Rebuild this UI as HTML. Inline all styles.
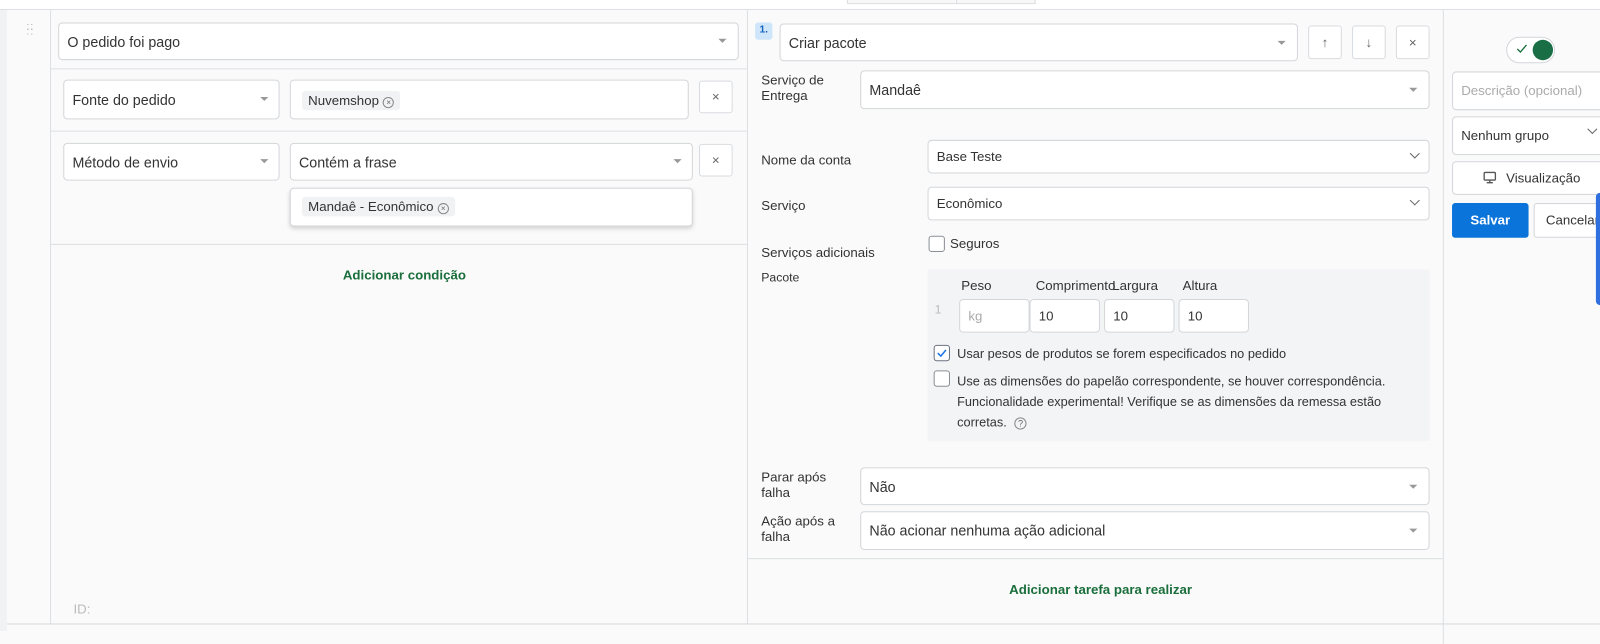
<!DOCTYPE html>
<html><head><meta charset="utf-8"><style>
*{box-sizing:border-box;margin:0;padding:0}
body{width:1600px;height:631px;overflow:hidden;background:#fafafa;font-family:"Liberation Sans",sans-serif;color:#333;font-size:14px;position:relative}
#w{position:absolute;left:0;top:0;width:1568px;height:619px;transform:scale(1.0204);transform-origin:0 0}
.a{position:absolute}
.box{position:absolute;background:#fff;border:1px solid #d3d6da;border-radius:4px}
.t{position:absolute;white-space:nowrap}
.car{position:absolute;width:0;height:0;border-left:4px solid transparent;border-right:4px solid transparent;border-top:4px solid #999}
.chev{position:absolute;width:7px;height:7px;border-right:1.5px solid #666;border-bottom:1.5px solid #666;transform:rotate(45deg)}
.xb{position:absolute;background:#fff;border:1px solid #d8dbdf;border-radius:3px;color:#666;text-align:center;font-size:13px}
.tag{position:absolute;background:#f0f2f4;border-radius:3px;font-size:13px;padding:2px 6px;color:#333}
.ci{display:inline-block;width:11px;height:11px;border:1px solid #888;border-radius:50%;font-size:8px;line-height:9px;text-align:center;color:#666;vertical-align:0;margin-left:4px}
.lbl{position:absolute;font-size:13px;color:#333;line-height:15px}
.cb{position:absolute;width:16px;height:16px;border:1px solid #8a8f95;border-radius:3px;background:#fff}
</style></head><body>
<div class="a" style="left:0;top:0;width:1600px;height:10px;background:#fff;border-bottom:1px solid #dcdfe3"></div>
<div class="a" style="left:0;top:10px;width:7px;height:621px;background:#f1f2f4"></div>
<div id="w">
<div class="a" style="left:830px;top:0;width:185px;height:4px;border:1px solid #dcdfe3;border-top:none;background:#f7f7f7"></div>
<div class="a" style="left:937px;top:0;width:1px;height:4px;background:#dcdfe3"></div>
<div class="a" style="left:49px;top:10px;width:1px;height:601px;background:#dcdfe3"></div>
<div class="a" style="left:732px;top:10px;width:1px;height:601px;background:#dcdfe3"></div>
<div class="a" style="left:1414px;top:10px;width:1px;height:621px;background:#dcdfe3"></div>
<div class="a" style="left:7px;top:611px;width:1593px;height:1px;background:#d6d9dd"></div>
<div class="t" style="left:26px;top:24px;color:#aaa;font-size:10px;line-height:5px;letter-spacing:1px">::<br>::</div>

<div class="box" style="left:57px;top:22px;width:667px;height:37px"></div>
<div class="t" style="left:66px;top:33px">O pedido foi pago</div>
<div class="car" style="left:704px;top:38px"></div>
<div class="a" style="left:50px;top:67px;width:682px;height:1px;background:#dcdfe3"></div>
<div class="box" style="left:62px;top:78px;width:212px;height:39px"></div>
<div class="t" style="left:71px;top:90px">Fonte do pedido</div>
<div class="car" style="left:255px;top:95px"></div>
<div class="box" style="left:284px;top:78px;width:391px;height:39px"></div>
<div class="tag" style="left:296px;top:89px">Nuvemshop<span class="ci">×</span></div>
<div class="xb" style="left:685px;top:79px;width:33px;height:32px;line-height:30px">×</div>
<div class="a" style="left:50px;top:128px;width:682px;height:1px;background:#dcdfe3"></div>
<div class="box" style="left:62px;top:140px;width:212px;height:37px"></div>
<div class="t" style="left:71px;top:151px">Método de envio</div>
<div class="car" style="left:255px;top:156px"></div>
<div class="box" style="left:284px;top:140px;width:395px;height:37px"></div>
<div class="t" style="left:293px;top:151px">Contém a frase</div>
<div class="car" style="left:660px;top:156px"></div>
<div class="xb" style="left:685px;top:141px;width:33px;height:32px;line-height:30px">×</div>
<div class="box" style="left:284px;top:184px;width:395px;height:38px;box-shadow:0 2px 4px rgba(0,0,0,.15)"></div>
<div class="tag" style="left:296px;top:193px">Mandaê - Econômico<span class="ci">×</span></div>
<div class="a" style="left:50px;top:239px;width:682px;height:1px;background:#dcdfe3"></div>
<div class="t" style="left:336px;top:262px;color:#1a6e3c;font-size:13px;font-weight:bold">Adicionar condição</div>
<div class="t" style="left:72px;top:589px;color:#bbb;font-size:13px">ID:</div>

<div class="a" style="left:740px;top:22px;width:17px;height:17px;background:#cfe5fa;border-radius:3px;color:#1565c0;font-size:10px;font-weight:bold;text-align:center;line-height:16px">1.</div>
<div class="box" style="left:764px;top:23px;width:508px;height:37px"></div>
<div class="t" style="left:773px;top:34px">Criar pacote</div>
<div class="car" style="left:1252px;top:40px"></div>
<div class="xb" style="left:1282px;top:25px;width:33px;height:33px;line-height:31px">↑</div>
<div class="xb" style="left:1325px;top:25px;width:33px;height:33px;line-height:31px">↓</div>
<div class="xb" style="left:1368px;top:25px;width:33px;height:33px;line-height:31px">×</div>
<div class="lbl" style="left:746px;top:71px">Serviço de<br>Entrega</div>
<div class="box" style="left:843px;top:69px;width:558px;height:38px"></div>
<div class="t" style="left:852px;top:80px">Mandaê</div>
<div class="car" style="left:1381px;top:86px"></div>
<div class="lbl" style="left:746px;top:149px">Nome da conta</div>
<div class="box" style="left:909px;top:137px;width:492px;height:33px"></div>
<div class="t" style="left:918px;top:146px;font-size:13px">Base Teste</div>
<div class="chev" style="left:1383px;top:147px"></div>
<div class="lbl" style="left:746px;top:194px">Serviço</div>
<div class="box" style="left:909px;top:183px;width:492px;height:33px"></div>
<div class="t" style="left:918px;top:192px;font-size:13px">Econômico</div>
<div class="chev" style="left:1383px;top:193px"></div>
<div class="lbl" style="left:746px;top:240px">Serviços adicionais</div>
<div class="cb" style="left:910px;top:231px"></div>
<div class="t" style="left:931px;top:231px;font-size:13px">Seguros</div>
<div class="lbl" style="left:746px;top:265px;font-size:12px">Pacote</div>
<div class="a" style="left:909px;top:264px;width:492px;height:168px;background:#f3f4f6"></div>
<div class="t" style="left:942px;top:272px;font-size:13px">Peso</div>
<div class="t" style="left:1015px;top:272px;font-size:13px">Comprimento</div>
<div class="t" style="left:1090px;top:272px;font-size:13px">Largura</div>
<div class="t" style="left:1159px;top:272px;font-size:13px">Altura</div>
<div class="t" style="left:916px;top:296px;font-size:12px;color:#bbb">1</div>
<div class="box" style="left:940px;top:293px;width:69px;height:33px"></div>
<div class="t" style="left:949px;top:302px;font-size:13px;color:#aaa">kg</div>
<div class="box" style="left:1009px;top:293px;width:69px;height:33px"></div>
<div class="t" style="left:1018px;top:302px;font-size:13px">10</div>
<div class="box" style="left:1082px;top:293px;width:69px;height:33px"></div>
<div class="t" style="left:1091px;top:302px;font-size:13px">10</div>
<div class="box" style="left:1155px;top:293px;width:69px;height:33px"></div>
<div class="t" style="left:1164px;top:302px;font-size:13px">10</div>
<div class="cb" style="left:915px;top:338px;border-color:#6b7280"><svg width="14" height="14" style="position:absolute;left:0;top:0"><path d="M3 7l3 3 5-6" stroke="#1a73e8" stroke-width="1.5" fill="none"/></svg></div>
<div class="t" style="left:938px;top:340px;font-size:12.5px">Usar pesos de produtos se forem especificados no pedido</div>
<div class="cb" style="left:915px;top:363px"></div>
<div class="t" style="left:938px;top:364px;font-size:12.5px;line-height:20px;white-space:normal;width:440px">Use as dimensões do papelão correspondente, se houver correspondência. Funcionalidade experimental! Verifique se as dimensões da remessa estão corretas. <span class="ci" style="width:12px;height:12px;font-size:9px;line-height:10px">?</span></div>
<div class="lbl" style="left:746px;top:460px">Parar após<br>falha</div>
<div class="box" style="left:843px;top:458px;width:558px;height:37px"></div>
<div class="t" style="left:852px;top:469px">Não</div>
<div class="car" style="left:1381px;top:475px"></div>
<div class="lbl" style="left:746px;top:503px">Ação após a<br>falha</div>
<div class="box" style="left:843px;top:501px;width:558px;height:38px"></div>
<div class="t" style="left:852px;top:512px">Não acionar nenhuma ação adicional</div>
<div class="car" style="left:1381px;top:518px"></div>
<div class="a" style="left:733px;top:547px;width:681px;height:1px;background:#dcdfe3"></div>
<div class="t" style="left:989px;top:570px;color:#1a6e3c;font-size:13px;font-weight:bold">Adicionar tarefa para realizar</div>

<div class="a" style="left:1476px;top:36px;width:48px;height:26px;border:1px solid #d3d6da;border-radius:13px;background:#fff"></div>
<svg class="a" style="left:1486px;top:43px" width="12" height="10"><path d="M1 5l3 3 6-7" stroke="#1a6e3c" stroke-width="1.3" fill="none"/></svg>
<div class="a" style="left:1502px;top:39px;width:20px;height:20px;border-radius:50%;background:#1a6e45"></div>
<div class="box" style="left:1423px;top:70px;width:190px;height:38px"></div>
<div class="t" style="left:1432px;top:81px;color:#aaa;font-size:13px">Descrição (opcional)</div>
<div class="box" style="left:1423px;top:114px;width:190px;height:38px"></div>
<div class="t" style="left:1432px;top:125px;font-size:13px">Nenhum grupo</div>
<div class="chev" style="left:1557px;top:123px"></div>
<div class="box" style="left:1423px;top:158px;width:190px;height:33px"></div>
<svg class="a" style="left:1453px;top:167px" width="14" height="14"><rect x="1.5" y="2" width="11" height="7.5" rx="1" stroke="#555" stroke-width="1.3" fill="none"/><path d="M4 12h6M7 9.5v2.5" stroke="#555" stroke-width="1.3"/></svg>
<div class="t" style="left:1476px;top:167px;font-size:13px">Visualização</div>
<div class="a" style="left:1423px;top:199px;width:75px;height:34px;background:#0b74da;border-radius:3px;color:#fff;font-size:13px;font-weight:bold;text-align:center;line-height:34px">Salvar</div>
<div class="box" style="left:1503px;top:199px;width:110px;height:34px;border-radius:3px"></div>
<div class="t" style="left:1515px;top:208px;font-size:13px">Cancelar</div>
<div class="a" style="left:1564px;top:189px;width:8px;height:110px;background:#2f6fe0;border-radius:4px"></div>
</div>
</body></html>
